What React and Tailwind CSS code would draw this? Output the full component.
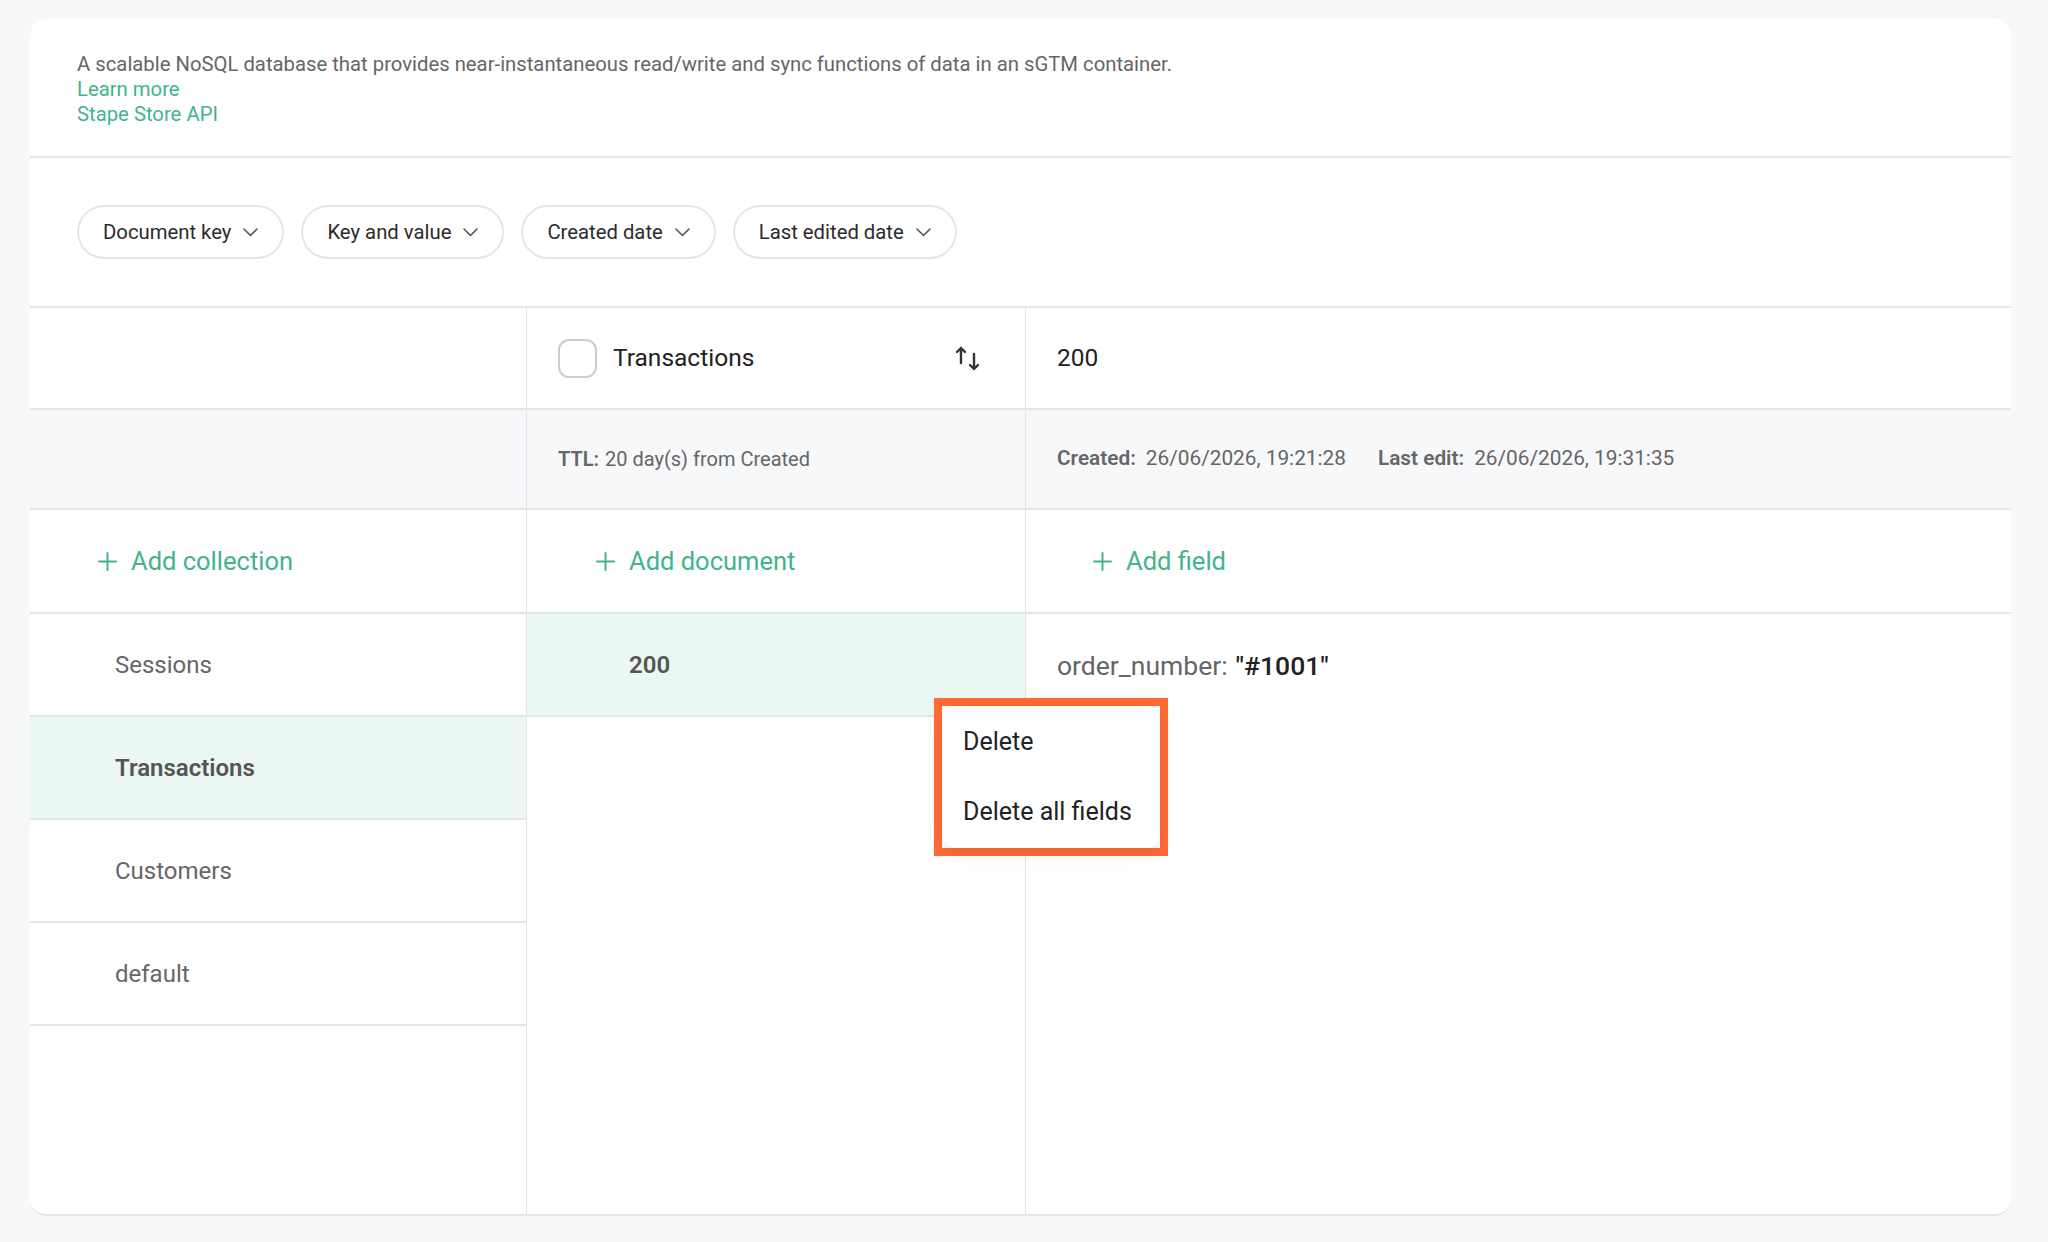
import React from 'react';

const font = { fontFamily: 'Roboto, "Noto Sans", sans-serif' };

function Chevron() {
  return <svg width="15" height="9" viewBox="0 0 15 9" fill="none" className="ml-3 shrink-0">
      <path d="M1 1l6.5 6.5L14 1" stroke="#555" strokeWidth="1.6" strokeLinecap="round" strokeLinejoin="round" />
    </svg>;
}

function Plus() {
  return <svg width="19" height="19" viewBox="0 0 19 19" fill="none" className="shrink-0">
      <path d="M9.5 1v17M1 9.5h17" stroke="#42b48a" strokeWidth="2" strokeLinecap="round" />
    </svg>;
}

function SortIcon() {
  return <svg width="26" height="25" viewBox="0 0 26 25" fill="none">
      <path d="M6 17V2M2 6l4-4 4 4" stroke="#333" strokeWidth="2.4" strokeLinecap="round" strokeLinejoin="round" />
      <path d="M19 8v15M15 19l4 4 4-4" stroke="#333" strokeWidth="2.4" strokeLinecap="round" strokeLinejoin="round" />
    </svg>;
}

function FilterPill({ label }) {
  return <button className="h-[54px] px-[24px] flex items-center rounded-full border-2 border-[#e4e5e9] bg-white text-[20.3px] text-[#2b2b2b]">
      {label}
      <Chevron />
    </button>;
}

function AddButton({ label }) {
  return <div className="flex items-center gap-[14px] text-[25.5px] text-[#42b48a]">
      <Plus />
      {label}
    </div>;
}

const collections = ['Sessions', 'Transactions', 'Customers', 'default'];

export default function App() {
  return <div className="min-h-[1242px] bg-[#f7f8fa] pl-[30px] pr-[37px] pt-[19px] pb-[26px]" style={font}>
      <div className="bg-white rounded-[16px] flex flex-col h-[1197px] overflow-hidden border-b-2 border-[#e4e5e9]">
        {/* intro */}
        <div className="px-[47px] pt-[33px] pb-[29px] border-b-2 border-[#e4e5e9] text-[20.3px] leading-[25px]">
          <p className="text-[#666]">A scalable NoSQL database that provides near-instantaneous read/write and sync functions of data in an sGTM container.</p>
          <a className="block text-[#42b48a]">Learn more</a>
          <a className="block text-[#42b48a]">Stape Store API</a>
        </div>

        {/* filters */}
        <div className="h-[150px] px-[47px] flex items-center gap-[17px] border-b-2 border-[#e4e5e9]">
          <FilterPill label="Document key" />
          <FilterPill label="Key and value" />
          <FilterPill label="Created date" />
          <FilterPill label="Last edited date" />
        </div>

        {/* table */}
        <div className="flex-1 grid grid-cols-[497px_499px_1fr] grid-rows-[102px_100px_104px_1fr]">
          <div className="border-b-2 border-r border-[#e4e5e9]" />
          <div className="border-b-2 border-r border-[#e4e5e9] flex items-center pl-[31px] pr-[44px]">
            <span className="w-[39px] h-[39px] rounded-[11px] border-2 border-[#c9ced6] bg-white shrink-0" />
            <span className="ml-[16px] text-[24.5px] text-[#222] flex-1">Transactions</span>
            <SortIcon />
          </div>
          <div className="border-b-2 border-[#e4e5e9] flex items-center pl-[31px] text-[24.5px] text-[#222]">200</div>

          <div className="bg-[#f7f8fa] border-b-2 border-r border-[#e4e5e9]" />
          <div className="bg-[#f7f8fa] border-b-2 border-r border-[#e4e5e9] flex items-center pl-[31px] text-[20px] text-[#666]">
            <span className="font-semibold mr-[6px]">TTL:</span>20 day(s) from Created
          </div>
          <div className="bg-[#f7f8fa] border-b-2 border-[#e4e5e9] flex items-center pl-[31px] text-[20.8px] text-[#666]">
            <span className="font-semibold mr-[10px]">Created:</span>26/06/2026, 19:21:28
            <span className="font-semibold mr-[10px] ml-[32px]">Last edit:</span>26/06/2026, 19:31:35
          </div>

          <div className="border-b-2 border-r border-[#e4e5e9] flex items-center pl-[68px]">
            <AddButton label="Add collection" />
          </div>
          <div className="border-b-2 border-r border-[#e4e5e9] flex items-center pl-[69px]">
            <AddButton label="Add document" />
          </div>
          <div className="border-b-2 border-[#e4e5e9] flex items-center pl-[67px]">
            <AddButton label="Add field" />
          </div>

          {/* collections */}
          <div className="border-r border-[#e4e5e9] flex flex-col">
            {collections.map(name => <div key={name} className={name === 'Transactions' ? 'h-[103px] border-b-2 border-[#e4e5e9] bg-[#ebf7f2] flex items-center pl-[85px] text-[24px] font-semibold text-[#555]' : 'h-[103px] border-b-2 border-[#e4e5e9] flex items-center pl-[85px] text-[24px] text-[#666]'}>
                {name}
              </div>)}
          </div>

          {/* documents */}
          <div className="border-r border-[#e4e5e9] flex flex-col relative">
            <div className="h-[103px] border-b-2 border-[#e4e5e9] bg-[#ebf7f2] flex items-center pl-[102px] text-[24px] font-semibold text-[#555]">200</div>
            <div className="absolute left-[407px] top-[84px] z-10 border-[8px] border-[#ff6b35] bg-white">
              <div className="w-[218px] rounded-[14px] bg-white shadow-[0_4px_18px_rgba(0,0,0,0.10)] py-[1px] text-[25px] text-[#222]">
                <div className="h-[70px] flex items-center pl-[21px]">Delete</div>
                <div className="h-[70px] flex items-center pl-[21px]">Delete all fields</div>
              </div>
            </div>
          </div>

          {/* fields */}
          <div className="flex flex-col">
            <div className="h-[103px] flex items-center pl-[31px] text-[26.5px]">
              <span className="text-[#666]">order_number:</span>
              <span className="ml-[8px] font-medium text-[#222]">"#1001"</span>
            </div>
          </div>
        </div>
      </div>
    </div>;
}
